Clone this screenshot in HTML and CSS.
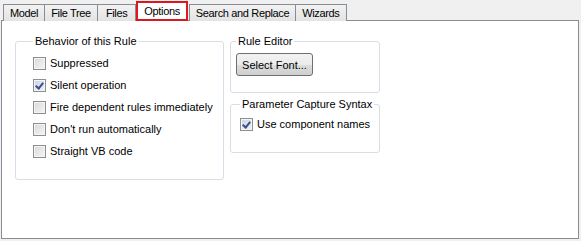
FILE: index.html
```html
<!DOCTYPE html>
<html lang="en">
  <head>
    <meta charset="UTF-8" />
    <title>Rule Options</title>
    <link rel="stylesheet" href="styles.css">
  </head>
  <body>
    <div class="dialog">
      <div class="tabs">
        <div class="tab">Model</div>
        <div class="tab">File Tree</div>
        <div class="tab files">Files</div>
        <div class="tab active">Options</div>
        <div class="tab">Search and Replace</div>
        <div class="tab">Wizards</div>
      </div>

      <div class="panel">
        <fieldset class="group behavior">
          <legend>Behavior of this Rule</legend>
          <label class="check"><span class="box"></span>Suppressed</label>
          <label class="check"><span class="box checked"></span>Silent operation</label>
          <label class="check"><span class="box"></span>Fire dependent rules immediately</label>
          <label class="check"><span class="box"></span>Don't run automatically</label>
          <label class="check"><span class="box"></span>Straight VB code</label>
        </fieldset>

        <div class="side">
          <fieldset class="group editor">
            <legend>Rule Editor</legend>
            <button class="btn">Select Font...</button>
          </fieldset>
          <fieldset class="group capture">
            <legend>Parameter Capture Syntax</legend>
            <label class="check"><span class="box checked"></span>Use component names</label>
          </fieldset>
        </div>
      </div>
    </div>
  </body>
</html>
```

FILE: styles.css
```css
body {
  margin: 0;
  background-color: #f0f0f0;
  font-family: "Liberation Sans", Arial, sans-serif;
  font-size: 11px;
  color: #000;
}
.dialog {
  width: 578px;
  padding: 1px 0 0 1px;
}
.tabs {
  display: flex;
  align-items: flex-end;
  height: 20px;
  padding-left: 2px;
}
.tab {
  height: 17px;
  line-height: 16px;
  padding: 0 6px;
  margin-right: -1px;
  letter-spacing: -0.35px;
  border: 1px solid #898c95;
  border-bottom: none;
  background: linear-gradient(#f2f2f2, #e3e3e3);
  box-sizing: border-box;
}
.tab.files {
  padding: 0 8px;
}
.tab.active {
  position: relative;
  z-index: 1;
  height: 20px;
  line-height: 17px;
  padding: 0 6px;
  margin: 0 1px 0 1px;
  border: 2px solid #e0161e;
  background: #fff;
}
.panel {
  display: flex;
  gap: 6px;
  height: 219px;
  box-sizing: border-box;
  margin-top: -1px;
  padding: 14px 0 0 13px;
  background-color: #fff;
  border: 1px solid #898c95;
}
.group {
  margin: 0;
  padding: 4px 5px 0 5px;
  border: 1px solid #d5dfe5;
  border-radius: 3px;
  box-sizing: border-box;
}
.group legend {
  padding: 0 2px;
  line-height: 13px;
}
.behavior {
  width: 209px;
  height: 145px;
  padding: 4px 0 0 17px;
}
.side {
  display: flex;
  flex-direction: column;
  gap: 5px;
}
.editor {
  width: 150px;
  height: 58px;
}
.capture {
  width: 150px;
  height: 55px;
  padding: 2px 0 0 9px;
}
.check {
  display: flex;
  align-items: center;
  gap: 4px;
  height: 22px;
}
.box {
  width: 11px;
  height: 11px;
  border: 1px solid #8e8f8f;
  background: linear-gradient(135deg, #d8d8d8, #f6f6f6);
  box-shadow: inset 0 0 0 1px #f4f4f4;
  position: relative;
}
.box.checked {
  background: linear-gradient(135deg, #c9d3e6, #eef2f8);
}
.box.checked::after {
  content: "";
  position: absolute;
  left: 3px;
  top: 1px;
  width: 3px;
  height: 6px;
  border: solid #3b4d87;
  border-width: 0 2px 2px 0;
  transform: rotate(40deg);
}
.btn {
  margin-top: 1px;
  width: 77px;
  height: 23px;
  padding: 0;
  font-family: inherit;
  font-size: 11px;
  color: #000;
  border: 1px solid #707070;
  border-radius: 3px;
  background: linear-gradient(#f2f2f2 0%, #ebebeb 50%, #dddddd 51%, #cfcfcf 100%);
}
```
